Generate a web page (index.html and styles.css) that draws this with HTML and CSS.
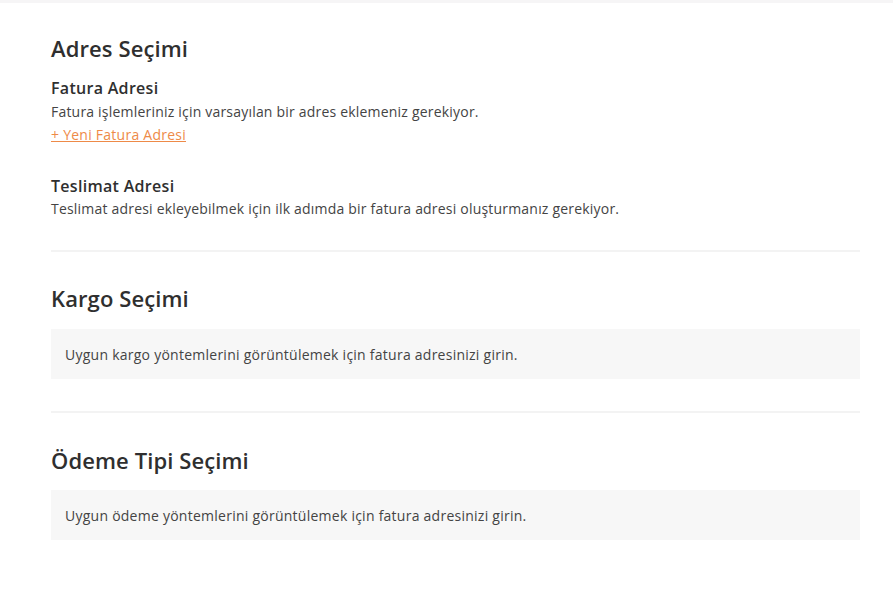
FILE: index.html
```html
<!DOCTYPE html>
<html lang="tr">
<head>
<meta charset="utf-8">
<link rel="stylesheet" href="styles.css">
</head>
<body>
<div class="topline"></div>
<main class="page">
  <section class="section first">
    <h2 class="title">Adres Seçimi</h2>
    <div class="block">
      <h3 class="subtitle">Fatura Adresi</h3>
      <p class="desc">Fatura işlemleriniz için varsayılan bir adres eklemeniz gerekiyor.</p>
      <a class="link" href="#">+ Yeni Fatura Adresi</a>
    </div>
    <div class="block second">
      <h3 class="subtitle">Teslimat Adresi</h3>
      <p class="desc">Teslimat adresi ekleyebilmek için ilk adımda bir fatura adresi oluşturmanız gerekiyor.</p>
    </div>
  </section>
  <hr class="divider divider-first">
  <section class="section cargo">
    <h2 class="title">Kargo Seçimi</h2>
    <div class="notice">Uygun kargo yöntemlerini görüntülemek için fatura adresinizi girin.</div>
  </section>
  <hr class="divider">
  <section class="section payment">
    <h2 class="title">Ödeme Tipi Seçimi</h2>
    <div class="notice">Uygun ödeme yöntemlerini görüntülemek için fatura adresinizi girin.</div>
  </section>
</main>
</body>
</html>
```
FILE: styles.css
```css
html, body {
  margin: 0;
  padding: 0;
  background: #ffffff;
}
body {
  font-family: "Open Sans", "Noto Sans", sans-serif;
  color: #333333;
}
.topline {
  height: 3px;
  background: #f6f5f6;
}
.page {
  width: 809px;
  margin-left: 51px;
  padding-top: 32px;
}
.section {
  display: flex;
  flex-direction: column;
}
.title {
  margin: 0;
  font-size: 22px;
  line-height: 26px;
  font-weight: 600;
  letter-spacing: 0.1px;
  color: #2f2f2f;
}
.block {
  display: flex;
  flex-direction: column;
  margin-top: 17px;
}
.block.second {
  margin-top: 32px;
}
.subtitle {
  margin: 0;
  font-size: 16px;
  line-height: 20px;
  font-weight: 600;
  letter-spacing: 0.3px;
  color: #2f2f2f;
}
.desc {
  margin: 4px 0 0;
  font-size: 14px;
  line-height: 19px;
  letter-spacing: 0.2px;
  color: #444444;
}
.second .desc {
  margin-top: 3px;
}
.link {
  margin-top: 5px;
  font-size: 14px;
  line-height: 18px;
  letter-spacing: 0.25px;
  color: #ee8a48;
  text-decoration: underline;
  align-self: flex-start;
}
.divider {
  border: 0;
  height: 2px;
  background: #f3f3f3;
  margin: 32px 0 0;
}
.divider-first {
  margin-top: 32px;
}
.cargo {
  padding-top: 33px;
}
.payment {
  padding-top: 34px;
}
.notice {
  margin-top: 18px;
  background: #f7f7f7;
  height: 50px;
  display: flex;
  align-items: center;
  padding-left: 14px;
  font-size: 14px;
  letter-spacing: 0.25px;
  color: #444444;
}
.payment .notice {
  margin-top: 17px;
}
```
